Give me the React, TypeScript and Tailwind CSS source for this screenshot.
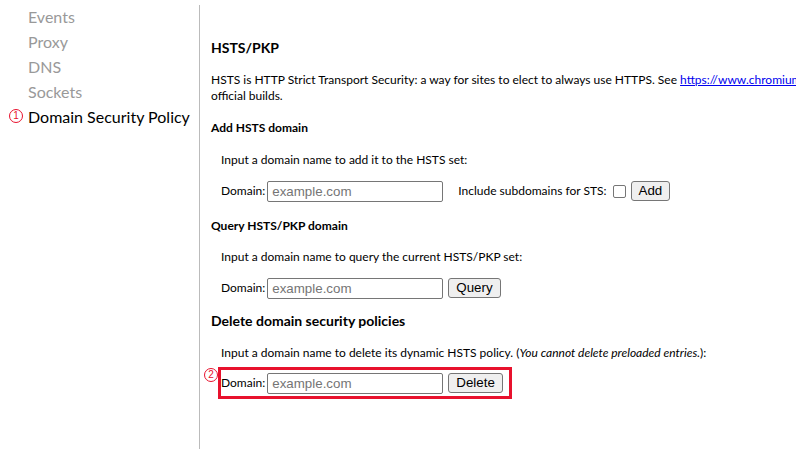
import React from 'react';

function Badge({ n, className }: { n: string; className: string }) {
    return (
        <span
            className={`absolute flex h-[14px] w-[14px] items-center justify-center rounded-full border border-[#e8112d] text-[10px] leading-none text-[#e8112d] ${className}`}
            style={{ fontFamily: '"Liberation Sans", Arial, sans-serif' }}
        >
            {n}
        </span>
    );
}

function DomainRow({ button, extra }: { button: string; extra?: React.ReactNode }) {
    return (
        <div className="flex h-[22px] items-center">
            <span className="mr-[2px]">Domain:</span>
            <input
                placeholder="example.com"
                className="h-[21px] w-[176px] rounded-[2px] border border-[#767676] bg-white px-[4px] font-['Liberation_Sans',Arial,sans-serif] text-[13.33px] text-black placeholder:text-[#757575] focus:outline-none"
            />
            {extra}
            <button className="ml-[5px] h-[20px] rounded-[3px] border border-[#767676] bg-[#efefef] px-[7px] font-['Liberation_Sans',Arial,sans-serif] text-[13.33px] leading-none text-black">
                {button}
            </button>
        </div>
    );
}

export default function App() {
    const nav = ['Events', 'Proxy', 'DNS', 'Sockets'];

    return (
        <div className="flex h-[449px] w-[796px] overflow-hidden bg-white font-['Lato','Noto_Sans',sans-serif] text-black">
            {/* sidebar */}
            <div className="w-[199px] shrink-0 pl-[28px] pt-[4px]">
                {nav.map((item) => (
                    <div key={item} className="h-[25px] text-[16px] leading-[25px] text-[#999999]">
                        {item}
                    </div>
                ))}
                <div className="relative h-[25px] text-[16px] leading-[25px]">
                    <Badge n="1" className="left-[-19px] top-[5px]" />
                    Domain Security Policy
                </div>
            </div>

            {/* content */}
            <div className="mt-[5px] flex-1 border-l border-[#bbbbbb] pl-[11px] pt-[33px] text-[12px] leading-[16px]">
                <h2 className="text-[14px] font-bold leading-[20px]">HSTS/PKP</h2>
                <p className="mt-[14px] whitespace-nowrap">
                    HSTS is HTTP Strict Transport Security: a way for sites to elect to always use HTTPS. See{' '}
                    <a href="#" className="text-[#0000ee] underline">https://www.chromium.org/hsts</a>. HPKP is HTTP
                    Public Key Pinning: a way for sites to pin themselves to certain keys. Both are enabled by default in
                    <br />
                    official builds.
                </p>

                <h3 className="mt-[16px] font-bold">Add HSTS domain</h3>
                <div className="pl-[10px]">
                    <p className="mt-[16px]">Input a domain name to add it to the HSTS set:</p>
                    <div className="mt-[12px]">
                        <DomainRow
                            button="Add"
                            extra={
                                <>
                                    <span className="ml-[15px]">Include subdomains for STS:</span>
                                    <input
                                        type="checkbox"
                                        className="ml-[6px] h-[13px] w-[13px] appearance-none rounded-[2px] border border-[#767676] bg-white"
                                    />
                                </>
                            }
                        />
                    </div>
                </div>

                <h3 className="mt-[16px] font-bold">Query HSTS/PKP domain</h3>
                <div className="pl-[10px]">
                    <p className="mt-[15px]">Input a domain name to query the current HSTS/PKP set:</p>
                    <div className="mt-[12px]">
                        <DomainRow button="Query" />
                    </div>
                </div>

                <h2 className="mt-[12px] text-[14px] font-bold leading-[20px]">Delete domain security policies</h2>
                <div className="pl-[10px]">
                    <p className="mt-[14px]">
                        Input a domain name to delete its dynamic HSTS policy. (<i>You cannot delete preloaded entries.</i>):
                    </p>
                    <div className="relative mt-[11px]">
                        <DomainRow button="Delete" />
                        <div className="pointer-events-none absolute left-[-3px] top-[-5px] h-[32px] w-[294px] border-[3px] border-[#e8112d]" />
                        <Badge n="2" className="left-[-17px] top-[-4px]" />
                    </div>
                </div>
            </div>
        </div>
    );
}
